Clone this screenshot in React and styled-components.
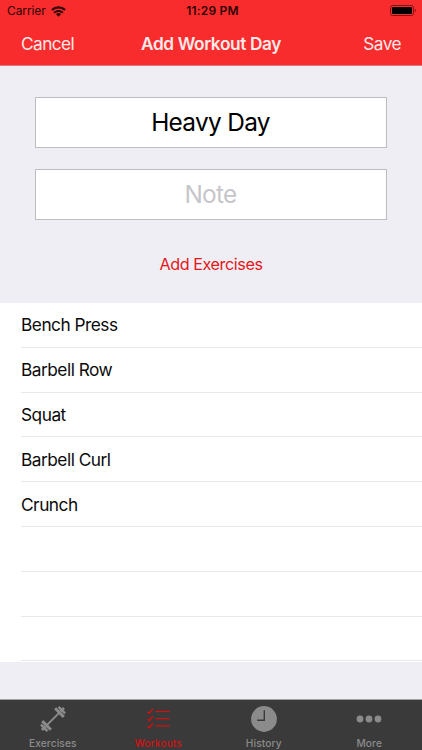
import React, { useState } from 'react';
import styled, { createGlobalStyle, ThemeProvider } from 'styled-components';

const theme = {
  branding: '#f92c2d',
  background: {
    primary: '#ffffff',
    secondary: '#efeef4',
    tabBar: '#3a3a3a',
  },
  border: '#bdbdc1',
  separator: '#e9e9eb',
  text: {
    primary: '#0b0b0b',
    placeholder: '#c6c6ca',
    inverse: '#ffe9e9',
    link: '#e4171b',
    tab: '#8b8b8b',
    tabActive: '#d60f10',
  },
};

const GlobalStyle = createGlobalStyle`
  * {
    box-sizing: border-box;
  }

  body {
    margin: 0;
    font-family: Inter, "Liberation Sans", sans-serif;
  }
`;

const Screen = styled.div`
  display: flex;
  flex-direction: column;
  width: 422px;
  height: 750px;
  overflow: hidden;
  background: ${(props) => props.theme.background.secondary};
`;

const Header = styled.header`
  height: 66px;
  flex: none;
  background: ${(props) => props.theme.branding};
  border-bottom: 1px solid #e0767c;
`;

const StatusBar = styled.div`
  display: grid;
  grid-template-columns: 1fr auto 1fr;
  align-items: center;
  height: 22px;
  padding: 0 5px 0 7px;
  font-size: 12px;
  line-height: 22px;
  color: #2c0506;
`;

const Carrier = styled.div`
  display: flex;
  align-items: center;
  gap: 5px;
  letter-spacing: -0.1px;
`;

const Clock = styled.div`
  padding-left: 1px;
  font-weight: 600;
  letter-spacing: 0.18px;
`;

const Battery = styled.svg`
  justify-self: end;
`;

const NavBar = styled.div`
  display: grid;
  grid-template-columns: 1fr auto 1fr;
  align-items: center;
  height: 42px;
  padding: 0 21px;
`;

const NavButton = styled.button`
  justify-self: ${(props) => props.$side};
  padding: 0;
  background: none;
  border: none;
  font-family: inherit;
  font-size: 17.3px;
  letter-spacing: -0.58px;
  color: ${(props) => props.theme.text.inverse};
`;

const Title = styled.h1`
  margin: 0;
  font-size: 17.3px;
  font-weight: 600;
  letter-spacing: -0.4px;
  color: ${(props) => props.theme.text.inverse};
`;

const Form = styled.div`
  display: flex;
  flex-direction: column;
  flex: none;
  gap: 21px;
  height: 237px;
  padding: 31px 35px 0;
`;

const Field = styled.input`
  width: 100%;
  height: 51px;
  padding: 0 1px 1px 0;
  background: ${(props) => props.theme.background.primary};
  border: 1px solid ${(props) => props.theme.border};
  border-radius: 0;
  outline: none;
  font-family: inherit;
  font-size: 24.4px;
  letter-spacing: -0.68px;
  text-align: center;
  color: #000;

  &::placeholder {
    color: ${(props) => props.theme.text.placeholder};
    opacity: 1;
  }
`;

const AddButton = styled.button`
  align-self: center;
  height: 30px;
  margin-top: 8px;
  padding: 0;
  background: none;
  border: none;
  font-family: inherit;
  font-size: 16.2px;
  letter-spacing: -0.44px;
  color: ${(props) => props.theme.text.link};
`;

const List = styled.ul`
  flex: none;
  margin: 0;
  padding: 0 0 1px 21px;
  list-style: none;
  background: ${(props) => props.theme.background.primary};
`;

const Row = styled.li`
  display: flex;
  align-items: center;
  height: 44.8px;
  border-bottom: 1px solid ${(props) => props.theme.separator};
  font-size: 17.3px;
  letter-spacing: -0.5px;
  color: ${(props) => props.theme.text.primary};
`;

const TabBar = styled.nav`
  display: grid;
  grid-template-columns: repeat(4, 1fr);
  flex: none;
  height: 51px;
  margin-top: auto;
  background: ${(props) => props.theme.background.tabBar};
  border-top: 1px solid #a3a3a6;
`;

const Tab = styled.button`
  display: flex;
  flex-direction: column;
  align-items: center;
  padding: 4px 0 0;
  background: none;
  border: none;
  font-family: inherit;
  font-size: 10.2px;
  font-weight: 500;
  line-height: 13px;
  letter-spacing: 0.1px;
  color: ${(props) => (props.$active ? props.theme.text.tabActive : props.theme.text.tab)};

  svg {
    display: block;
    margin-bottom: 3px;
  }
`;

function WifiIcon() {
  return (
    <svg width="15" height="11" viewBox="0 0 15 11" fill="none" stroke="currentColor" strokeWidth="2.3">
      <path d="M0.9 4a9.4 9.4 0 0 1 13.2 0" />
      <path d="M3.1 6.8a6.2 6.2 0 0 1 8.8 0" strokeWidth="2" />
      <path d="M7.5 10.8 5 8.3a3.6 3.6 0 0 1 5 0z" fill="currentColor" stroke="none" />
    </svg>
  );
}

function BatteryIcon() {
  return (
    <Battery width="27" height="12" viewBox="0 0 27 12">
      <rect x="0.5" y="0.5" width="23" height="10" rx="2.2" fill="none" stroke="#7d1617" />
      <rect x="2" y="2" width="20" height="7" rx="0.9" fill="#000" />
      <path d="M24.8 3.7c1.6.6 1.6 3 0 3.6z" fill="#7d1617" />
    </Battery>
  );
}

function DumbbellIcon() {
  return (
    <svg width="30" height="30" viewBox="0 0 30 30" fill="none" stroke="currentColor">
      <g transform="rotate(-45 15 15)">
        <path d="M6 15h18" strokeWidth="2" />
        <path d="M5.9 8.9v12.2M24.1 8.9v12.2" strokeWidth="3" />
        <path d="M2.5 10.4v9.2M27.5 10.4v9.2" strokeWidth="2.4" />
        <path d="M-0.6 15h5M25.6 15h5" strokeWidth="2.6" />
      </g>
    </svg>
  );
}

function ChecklistIcon() {
  return (
    <svg width="30" height="30" viewBox="0 0 30 30" fill="none" stroke="currentColor">
      {[7.5, 14.7, 21.9].map((y) => (
        <g key={y}>
          <path d={`M4.6 ${y + 0.2}l1.6 1.8 3.7-4.6`} strokeWidth="1.4" />
          <path d={`M12.4 ${y}h14.2`} strokeWidth="1.2" />
        </g>
      ))}
    </svg>
  );
}

function ClockIcon() {
  return (
    <svg width="30" height="30" viewBox="0 0 30 30">
      <circle cx="15" cy="15" r="12.9" fill="currentColor" />
      <path d="M15.3 6.2v10.1H8.2" fill="none" stroke="#3a3a3a" strokeWidth="1.4" />
    </svg>
  );
}

function MoreIcon() {
  return (
    <svg width="30" height="30" viewBox="0 0 30 30" fill="currentColor">
      <circle cx="6" cy="15" r="3.4" />
      <circle cx="15" cy="15" r="3.4" />
      <circle cx="24" cy="15" r="3.4" />
    </svg>
  );
}

const tabs = [
  { name: 'Exercises', Icon: DumbbellIcon },
  { name: 'Workouts', Icon: ChecklistIcon },
  { name: 'History', Icon: ClockIcon },
  { name: 'More', Icon: MoreIcon },
];

const exercises = ['Bench Press', 'Barbell Row', 'Squat', 'Barbell Curl', 'Crunch'];

// the table is always padded with blank rows
const ROW_COUNT = 8;

function App() {
  const [name, setName] = useState('Heavy Day');
  const [note, setNote] = useState('');
  const [activeTab, setActiveTab] = useState('Workouts');

  const rows = Array.from({ length: ROW_COUNT }, (_, i) => exercises[i] || '');

  return (
    <ThemeProvider theme={theme}>
      <GlobalStyle />
      <Screen>
        <Header>
          <StatusBar>
            <Carrier>
              Carrier
              <WifiIcon />
            </Carrier>
            <Clock>11:29 PM</Clock>
            <BatteryIcon />
          </StatusBar>
          <NavBar>
            <NavButton $side="start">Cancel</NavButton>
            <Title>Add Workout Day</Title>
            <NavButton $side="end">Save</NavButton>
          </NavBar>
        </Header>

        <Form>
          <Field value={name} onChange={(e) => setName(e.target.value)} />
          <Field
            placeholder="Note"
            value={note}
            onChange={(e) => setNote(e.target.value)}
          />
          <AddButton>Add Exercises</AddButton>
        </Form>

        <List>
          {rows.map((row, i) => (
            <Row key={row || i}>{row}</Row>
          ))}
        </List>

        <TabBar>
          {tabs.map(({ name: tab, Icon }) => (
            <Tab
              key={tab}
              $active={tab === activeTab}
              onClick={() => setActiveTab(tab)}
            >
              <Icon />
              {tab}
            </Tab>
          ))}
        </TabBar>
      </Screen>
    </ThemeProvider>
  );
}

export default App;
